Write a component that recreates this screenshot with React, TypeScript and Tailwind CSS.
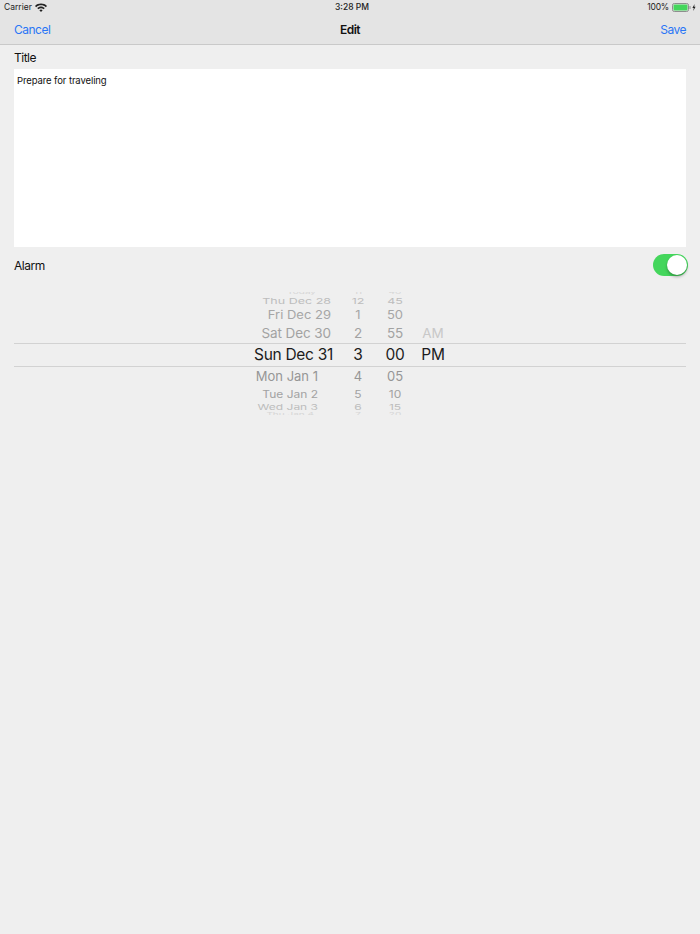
import React from 'react';

interface PickerRow {
  date: string;
  hour: string;
  minute: string;
  ampm?: string;
  rowClass: string;
  textClass: string;
  datePad: string;
}

const rows: PickerRow[] = [
  { date: 'Today', hour: '11', minute: '40', rowClass: 'h-[4px] overflow-hidden', textClass: 'text-[#d6d6d6] text-[10px] leading-[4px] scale-y-[0.5] -translate-y-[2px]', datePad: 'pr-[18px]' },
  { date: 'Thu Dec 28', hour: '12', minute: '45', rowClass: 'h-[11px]', textClass: 'text-[#bdbdbd] text-[12.5px] leading-[10px] scale-y-[0.65]', datePad: 'pr-[3px]' },
  { date: 'Fri Dec 29', hour: '1', minute: '50', rowClass: 'h-[16px]', textClass: 'text-[#a6a6a6] text-[13px] leading-[16px] scale-y-[0.85]', datePad: 'pr-[3px]' },
  { date: 'Sat Dec 30', hour: '2', minute: '55', ampm: 'AM', rowClass: 'h-[20px]', textClass: 'text-[#a2a2a2] text-[13.5px] tracking-[-0.1px] leading-[21px]', datePad: 'pr-[3px]' },
  { date: 'Sun Dec 31', hour: '3', minute: '00', ampm: 'PM', rowClass: 'h-[24px] border-y border-[#d2d2d2]', textClass: 'text-[#1c1c1c] text-[15.5px] tracking-[-0.3px] leading-[22px]', datePad: 'pr-[1px]' },
  { date: 'Mon Jan 1', hour: '4', minute: '05', rowClass: 'h-[20px]', textClass: 'text-[#969696] text-[13px] leading-[18px]', datePad: 'pr-[16px]' },
  { date: 'Tue Jan 2', hour: '5', minute: '10', rowClass: 'h-[16px]', textClass: 'text-[#a2a2a2] text-[12px] leading-[16px] scale-y-[0.85]', datePad: 'pr-[16px]' },
  { date: 'Wed Jan 3', hour: '6', minute: '15', rowClass: 'h-[9px]', textClass: 'text-[#bdbdbd] text-[12px] leading-[9px] scale-y-[0.65]', datePad: 'pr-[16px]' },
  { date: 'Thu Jan 4', hour: '7', minute: '20', rowClass: 'h-[3px] overflow-hidden', textClass: 'text-[#d6d6d6] text-[10px] leading-[5px] scale-y-[0.5]', datePad: 'pr-[20px]' },
];

const WifiIcon = () => (
  <svg width="12" height="9" viewBox="0 0 12 9" fill="#222">
    <path d="M0 3 C3.2 -0.2 8.8 -0.2 12 3 L10.8 4.2 C8.2 1.6 3.8 1.6 1.2 4.2 Z" />
    <path d="M2.2 5.1 C4.3 3 7.7 3 9.8 5.1 L8.6 6.3 C7.2 4.9 4.8 4.9 3.4 6.3 Z" />
    <path d="M4.4 7.2 C5.3 6.4 6.7 6.4 7.6 7.2 L6 8.9 Z" />
  </svg>
);

const BatteryIcon = () => (
  <svg width="24" height="9" viewBox="0 0 24 9">
    <rect x="0.5" y="0.5" width="16" height="8" rx="1.8" fill="none" stroke="#8e8e8e" />
    <rect x="1.5" y="1.5" width="14" height="6" rx="1" fill="#44d65c" />
    <rect x="17.5" y="3" width="1" height="3" fill="#8e8e8e" />
    <path d="M22.6 1 L20.4 5 H21.8 L21.2 8 L23.6 3.8 H22.2 Z" fill="#222" />
  </svg>
);

export default function App() {
  return (
    <div className="h-[934px] w-[700px] overflow-hidden bg-[#efefef] font-['Inter',sans-serif] text-[#111]">
      {/* Status + nav bar */}
      <div className="h-[45px] border-b border-[#c9c9c9] bg-[#e4e4e4]">
        <div className="relative flex h-[14px] items-center justify-between pl-1 pr-1 text-[8.5px] text-[#222]">
          <div className="flex items-center gap-[3px]">
            <span>Carrier</span>
            <WifiIcon />
          </div>
          <span className="absolute left-[335px] top-[2px] font-medium leading-[10px]">3:28 PM</span>
          <div className="flex items-center gap-[3px]">
            <span className="tracking-[-0.2px]">100%</span>
            <BatteryIcon />
          </div>
        </div>
        <div className="grid h-[30px] grid-cols-3 items-center px-[14px] pt-[1px] text-[12px] tracking-[-0.5px]">
          <span className="text-[#2a76f6]">Cancel</span>
          <span className="text-center font-semibold">Edit</span>
          <span className="text-right text-[#2a76f6]">Save</span>
        </div>
      </div>

      <div className="px-[14px]">
        <div className="flex h-[24px] items-center pt-[1px] text-[12px] tracking-[-0.5px]">Title</div>
        <div className="h-[178px] bg-white px-[3px] py-[5px] text-[9.5px] leading-[13px] tracking-[-0.1px]">
          Prepare for traveling
        </div>
        <div className="flex h-[36px] items-center justify-between text-[12px] tracking-[-0.5px]">
          <span className="pt-[1px]">Alarm</span>
          <div className="-mr-[2px] flex h-[22px] w-[35px] items-center justify-end rounded-full bg-[#44d65c] pr-[1px]">
            <div className="h-[20px] w-[20px] rounded-full bg-white shadow-[0_2px_3px_rgba(0,0,0,0.3)]" />
          </div>
        </div>

        {/* Date picker wheel */}
        <div className="mt-[9px] flex flex-col">
          {rows.map((row) => (
            <div key={row.date} className={`grid grid-cols-[320px_48px_26px_50px] ${row.rowClass}`}>
              <div className={`text-right ${row.datePad}`}>
                <div className={`origin-center ${row.textClass}`}>{row.date}</div>
              </div>
              <div className={`origin-center text-center ${row.textClass}`}>{row.hour}</div>
              <div className={`origin-center text-center ${row.textClass}`}>{row.minute}</div>
              <div className={`origin-center text-center ${row.textClass} ${row.ampm === 'AM' ? 'text-[#c8c8c8]' : ''}`}>{row.ampm}</div>
            </div>
          ))}
        </div>
      </div>
    </div>
  );
}
